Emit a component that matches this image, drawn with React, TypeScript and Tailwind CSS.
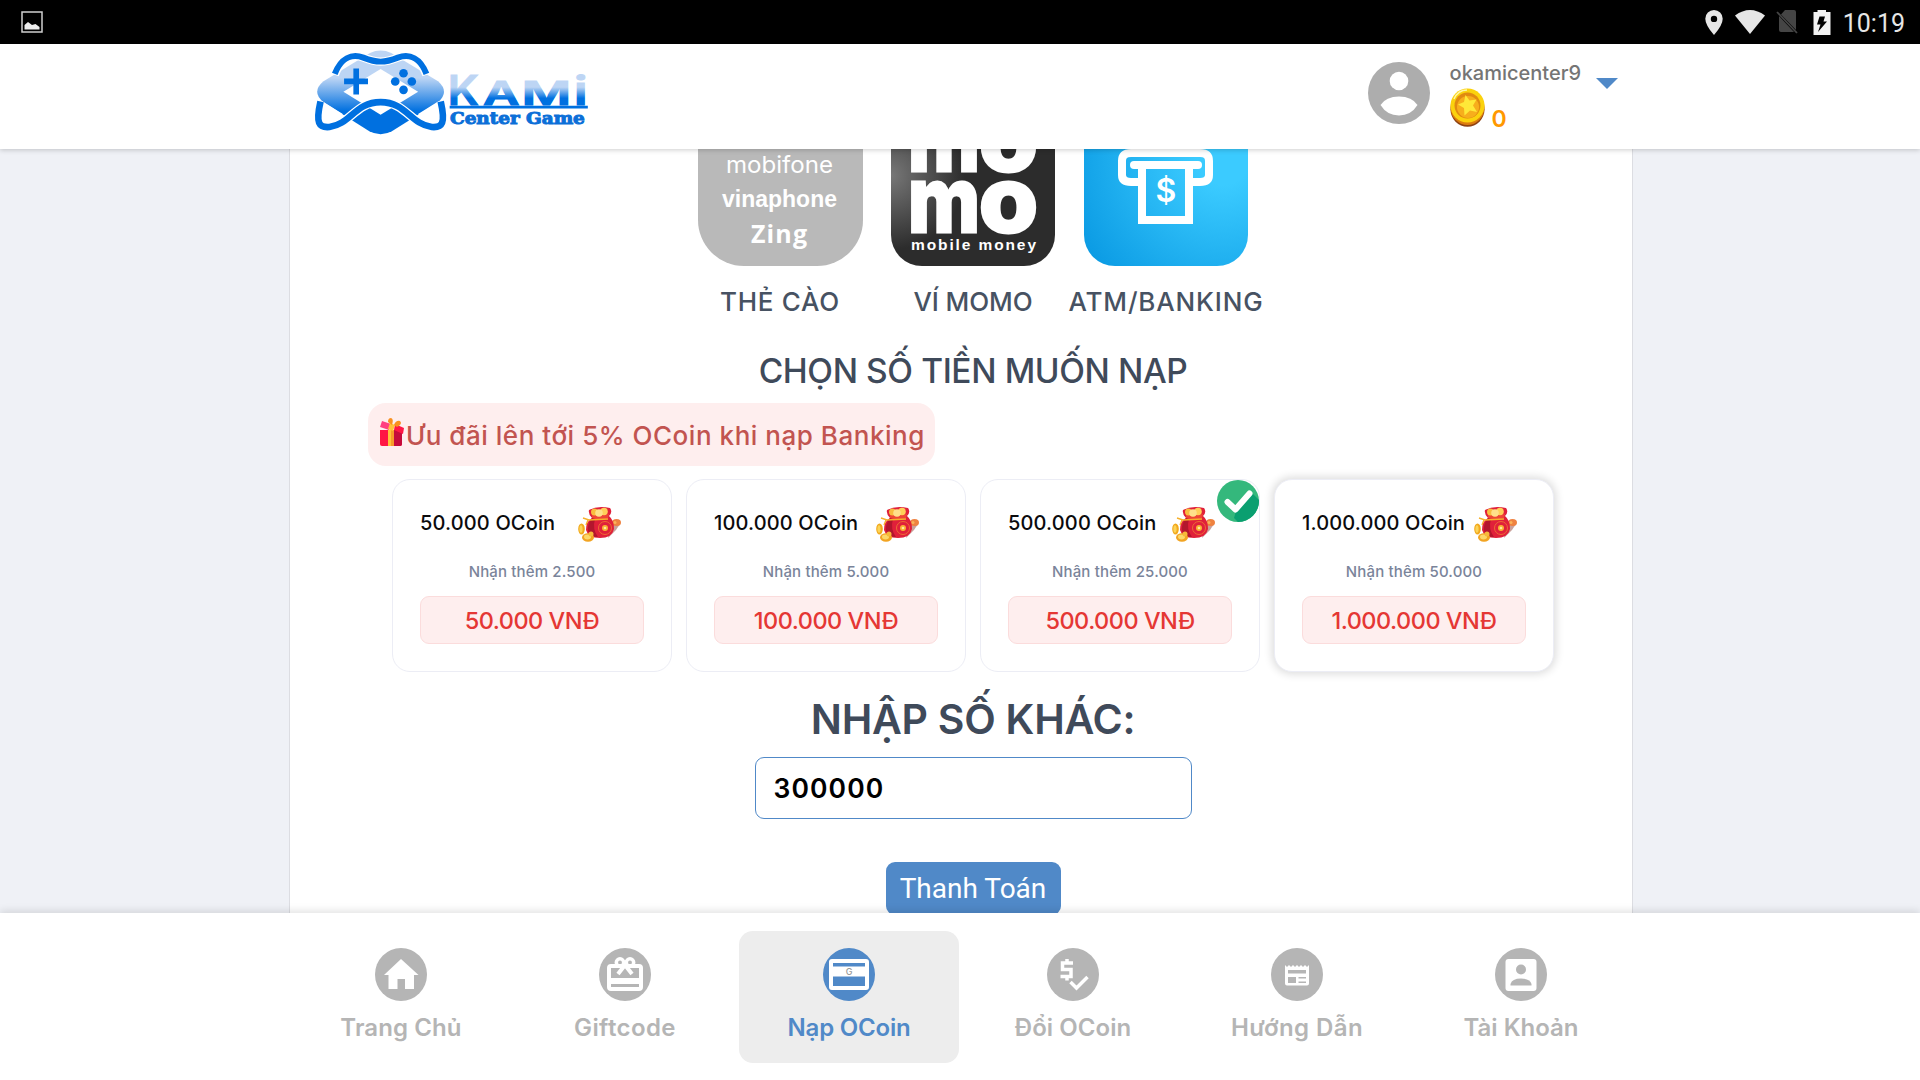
import { FC, ReactNode } from "react";

type Pack = {
  coins: string;
  bonus: string;
  price: string;
  selected?: boolean;
  raised?: boolean;
};

const packs: Pack[] = [
  { coins: "50.000 OCoin", bonus: "Nhận thêm 2.500", price: "50.000 VNĐ" },
  { coins: "100.000 OCoin", bonus: "Nhận thêm 5.000", price: "100.000 VNĐ" },
  { coins: "500.000 OCoin", bonus: "Nhận thêm 25.000", price: "500.000 VNĐ", selected: true },
  { coins: "1.000.000 OCoin", bonus: "Nhận thêm 50.000", price: "1.000.000 VNĐ", raised: true },
];

const Logo: FC = () => (
  <svg viewBox="100 145 840 265" className="h-[88px] w-[280px]">
    <defs>
      <linearGradient id="body" x1="0" y1="150" x2="0" y2="400" gradientUnits="userSpaceOnUse">
        <stop offset="0.34" stopColor="#bdd5f4" />
        <stop offset="0.74" stopColor="#0070e0" />
      </linearGradient>
      <linearGradient id="word" x1="0" y1="225" x2="0" y2="320" gradientUnits="userSpaceOnUse">
        <stop offset="0.4" stopColor="#bdd5f4" />
        <stop offset="0.75" stopColor="#0070e0" />
      </linearGradient>
    </defs>
    <path
      d="M130 245Q92 277 130 308L268 396Q302 414 336 396L475 308Q511 277 475 245L334 160Q302 145 270 160Z"
      fill="url(#body)"
    />
    <path d="M302 208L415 277L302 346L190 277Z" fill="#fff" />
    <path d="M108 300L128 306L188 344Q160 386 128 380ZM496 300L475 306L415 344Q444 386 476 380Z" fill="#fff" />
    <g fill="none">
      <path d="M164 226C182 176 214 161 250 174C290 190 314 190 354 174C390 161 422 176 440 226" stroke="#fff" strokeWidth="25" />
      <path d="M164 223C182 176 214 161 250 174C290 190 314 190 354 174C390 161 422 176 440 223" stroke="#0070e0" strokeWidth="18" />
      <path d="M121 306C102 372 116 386 148 383C212 374 226 308 302 308C378 308 392 374 456 383C488 386 502 372 483 306" stroke="#fff" strokeWidth="27" />
      <path d="M121 306C106 372 116 386 148 383C212 374 226 308 302 308C378 308 392 374 456 383C488 386 498 372 483 306" stroke="#0070e0" strokeWidth="20" />
    </g>
    <path d="M220 207h17v30h27v17h-27v31h-17v-31h-28v-17h28z" fill="#0070e0" />
    <g fill="#0070e0">
      <circle cx="371" cy="221" r="13" />
      <circle cx="371" cy="271" r="13" />
      <circle cx="346" cy="246" r="13" />
      <circle cx="396" cy="246" r="13" />
    </g>
    <text y="317" fill="url(#word)" stroke="url(#word)" strokeWidth="3" className="font-['Inter'] font-semibold">
      <tspan x="504" fontSize="122" textLength="94" lengthAdjust="spacingAndGlyphs">K</tspan>
      <tspan x="610" fontSize="98" textLength="110" lengthAdjust="spacingAndGlyphs">A</tspan>
      <tspan x="726" fontSize="98" textLength="150" lengthAdjust="spacingAndGlyphs">M</tspan>
      <tspan x="884" fontSize="118" textLength="42" lengthAdjust="spacingAndGlyphs">i</tspan>
    </text>
    <path d="M510 323H926" stroke="#0070e0" strokeWidth="8" />
    <text x="511" y="374" fontSize="49" textLength="406" lengthAdjust="spacingAndGlyphs" fill="#0b6fd8" stroke="#0b6fd8" strokeWidth="3" className="font-['DejaVu_Serif'] font-bold">
      Center Game
    </text>
  </svg>
);

const Coin: FC = () => (
  <svg viewBox="0 0 35 39" className="h-[39px] w-[35px]">
    <ellipse cx="17.5" cy="21.5" rx="17" ry="17.3" fill="#8f4312" />
    <ellipse cx="17.5" cy="19.5" rx="17" ry="17.5" fill="#dd7d0e" />
    <ellipse cx="17.5" cy="17.5" rx="17" ry="17" fill="#fbd20d" />
    <ellipse cx="17.5" cy="17.5" rx="13" ry="13" fill="#e08a10" />
    <ellipse cx="18" cy="19" rx="11" ry="11" fill="#f7ae1c" />
    <path d="M15.500 7l4 5.500l7-1l-3.500 6l4 6.500l-7-1.500l-5.500 5l-.5-7.500l-6-3.500l6-2.500z" fill="#ffe838" />
    <path d="M4 11Q8 2 17 2" stroke="#fff6a8" strokeWidth="1.500" fill="none" />
  </svg>
);

const MoneyBag: FC = () => (
  <svg viewBox="0 0 44 35" className="mt-[3px] h-[35px] w-11 shrink-0 overflow-visible">
    <path d="M33 15l6-1l3 3l-4 6l-8 8z" fill="#c9a09a" />
    <ellipse cx="38.500" cy="15.500" rx="4.500" ry="3.500" fill="#ef8240" />
    <circle cx="37" cy="15.500" r="1.500" fill="#f9b45a" />
    <path d="M11 3Q20-2 32 1Q35 5 31 9Q36 13 36 22Q34 31 22 31Q10 31 8 23Q8 14 14 11Q10 7 11 3Z" fill="#e0203a" />
    <path d="M14 11Q9 17 10 24Q13 30 20 30Q14 22 17 12Z" fill="#b3162d" />
    <path d="M14 5Q21 10 31 7L30 11Q22 14 14 11Z" fill="#ef4436" />
    <circle cx="16.500" cy="5" r="3.500" fill="#f9bd3f" />
    <circle cx="26" cy="4.500" r="3.800" fill="#ffcf58" />
    <circle cx="21" cy="6" r="3.800" fill="#ffe08a" />
    <path d="M5 11l6 2l19-1M10 13l-2 5" stroke="#f6b02c" strokeWidth="1.400" fill="none" />
    <circle cx="27" cy="21" r="6.500" fill="none" stroke="#ee6a33" strokeWidth="1" />
    <circle cx="27" cy="21" r="3" fill="#f9b233" />
    <circle cx="27" cy="21" r="1.300" fill="#ffe9a0" />
    <ellipse cx="3.500" cy="22" rx="3.300" ry="5.500" fill="#f2a91d" />
    <ellipse cx="3" cy="22" rx="1.600" ry="3.800" fill="#fbd458" />
    <ellipse cx="10" cy="30.500" rx="6" ry="4.200" fill="#f2a422" />
    <ellipse cx="9.500" cy="30" rx="3.500" ry="2.400" fill="#fcd868" />
    <circle cx="13" cy="27" r="2.500" fill="#f6b93a" />
  </svg>
);

const Gift: FC = () => (
  <svg viewBox="0 0 24 28" className="-mt-1.5 h-7 w-6 shrink-0">
    <path d="M0 12h22v14a2 2 0 0 1-2 2H2a2 2 0 0 1-2-2z" fill="#ff1744" />
    <path d="M13 12h9v14a2 2 0 0 1-2 2h-7z" fill="#c60a3b" />
    <path d="M8 12h6v16H8z" fill="#ffc23a" />
    <path d="M11 12h3v16h-3z" fill="#f79a2a" />
    <path d="M2 3l9 3l-2 6l-9-3z" fill="#ff4081" />
    <path d="M15 6l9 4l-1 6l-9-4z" fill="#ff1744" />
    <path d="M10 5l5 2l-2 6l-5-2z" fill="#ffc23a" />
    <path d="M8 4Q8 0 11 0Q14 1 12 7ZM14 7Q16 2 20 3Q23 6 17 9Z" fill="#f99020" />
  </svg>
);

const CardTile: FC = () => (
  <svg viewBox="0 0 165 165" className="h-[165px] w-[165px] rounded-[46px]">
    <rect width="165" height="165" fill="#b9b9b9" />
    <g fill="#fff">
      <text x="28" y="72" fontSize="23" textLength="107" lengthAdjust="spacingAndGlyphs" className="font-['Inter'] font-normal">
        mobifone
      </text>
      <text x="24" y="106" fontSize="24" textLength="115" lengthAdjust="spacingAndGlyphs" className="font-['Liberation_Sans'] font-bold">
        vinaphone
      </text>
      <text x="53" y="142" fontSize="25" textLength="56" lengthAdjust="spacing" className="font-['Open_Sans'] font-bold">
        Zing
      </text>
    </g>
  </svg>
);

const MomoTile: FC = () => (
  <svg viewBox="0 0 164 165" className="h-[165px] w-[164px] rounded-[31px]">
    <defs>
      <radialGradient id="shine" cx="0" cy="0.45" r="0.45">
        <stop offset="0" stopColor="#777" />
        <stop offset="1" stopColor="#2c2c2c" />
      </radialGradient>
    </defs>
    <rect width="164" height="165" fill="url(#shine)" />
    <g fill="#fff" stroke="#fff" strokeWidth="3" fontSize="91" className="font-['Inter'] font-extrabold">
      <text x="17" y="70" textLength="72" lengthAdjust="spacingAndGlyphs">m</text>
      <text x="88" y="70" textLength="59" lengthAdjust="spacingAndGlyphs">o</text>
      <text x="17" y="131" textLength="72" lengthAdjust="spacingAndGlyphs">m</text>
      <text x="88" y="131" textLength="59" lengthAdjust="spacingAndGlyphs">o</text>
    </g>
    <text x="20" y="149" fontSize="15.500" textLength="125" fill="#fff" className="font-['Liberation_Sans'] font-bold">
      mobile money
    </text>
  </svg>
);

const AtmTile: FC = () => (
  <svg viewBox="0 0 164 165" className="h-[165px] w-[164px] rounded-[31px]">
    <defs>
      <radialGradient id="sky" cx="0.85" cy="0.35" r="1.05">
        <stop offset="0.15" stopColor="#3bcbff" />
        <stop offset="1" stopColor="#0898e2" />
      </radialGradient>
    </defs>
    <rect width="164" height="165" fill="url(#sky)" />
    <g fill="none" stroke="#fff" strokeWidth="8" strokeLinejoin="round">
      <path d="M54 81H47Q38 81 38 74V60Q38 52 47 52H116Q125 52 125 60V74Q125 81 116 81H109" />
      <path d="M50 64H114" strokeLinecap="round" />
      <path d="M58 65V119H105V65" strokeLinejoin="miter" />
      <path d="M58 119H105" />
    </g>
    <text x="82" y="101" fontSize="32" textAnchor="middle" fill="#fff" className="font-['Inter'] font-semibold">
      $
    </text>
  </svg>
);

const methods = [
  { label: "THẺ CÀO", tile: <CardTile />, tracking: "tracking-[0.7px]" },
  { label: "VÍ MOMO", tile: <MomoTile />, tracking: "tracking-[-0.1px]" },
  { label: "ATM/BANKING", tile: <AtmTile />, tracking: "tracking-[0.85px]" },
];

const PackCard: FC<{ pack: Pack }> = ({ pack }) => (
  <div
    className={`relative h-[193px] rounded-[18px] border border-[#ecedf5] bg-white px-[27px] pt-[27px] ${
      pack.raised ? "shadow-[0_0_9px_2px_rgba(0,0,0,0.14)]" : ""
    }`}
  >
    <div className="flex h-8 items-center text-[20px] font-medium tracking-[0.15px] text-[#0b0b0d]">
      <span className="whitespace-nowrap">{pack.coins}</span>
      <div className="flex flex-1 justify-center">
        <MoneyBag />
      </div>
    </div>
    <p className="mt-[21px] text-center text-[15px] leading-6 font-medium tracking-[0.15px] text-[#7a849a]">
      {pack.bonus}
    </p>
    <div className="mt-3 flex h-12 items-center justify-center rounded-[9px] border border-[#fbdcdc] bg-[#feeeee] pt-px text-[23.5px] font-medium tracking-[-0.5px] text-[#e53734]">
      {pack.price}
    </div>
    {pack.selected && (
      <svg viewBox="0 0 42 42" className="absolute top-0 right-0 h-[42px] w-[42px]">
        <circle cx="21" cy="21" r="21" fill="#34b87c" />
        <path d="M35 13L42 20A21 21 0 0 1 21 42L17 38L19 31Z" fill="#0a9f70" />
        <path d="M10.500 22L18.500 29.500L32.500 13.500" fill="none" stroke="#fff" strokeWidth="6" strokeLinecap="round" strokeLinejoin="round" />
      </svg>
    )}
  </div>
);

type NavItem = { label: string; icon: ReactNode; tracking: string; active?: boolean };

const navItems: NavItem[] = [
  {
    label: "Trang Chủ",
    tracking: "tracking-[0.1px]",
    icon: <path d="M26 11L43.500 27H39V41H30V31H22.500V41H13.500V27H9Z" fill="#fff" />,
  },
  {
    label: "Giftcode",
    tracking: "tracking-[0.4px]",
    icon: (
      <g fill="none" stroke="#fff" strokeWidth="4">
        <rect x="10" y="18" width="32" height="23" rx="2" />
        <path d="M10 33H42" strokeWidth="6" />
        <circle cx="21" cy="14.500" r="3.700" strokeWidth="3.500" />
        <circle cx="31" cy="14.500" r="3.700" strokeWidth="3.500" />
        <path d="M26 17L19 26M26 17L33 26" />
      </g>
    ),
  },
  {
    label: "Nạp OCoin",
    tracking: "tracking-[-0.2px]",
    active: true,
    icon: (
      <>
        <path fillRule="evenodd" d="M9 11H43Q46 11 46 14V39Q46 42 43 42H9Q6 42 6 39V14Q6 11 9 11ZM10 15V18.500H42V15ZM10 28.500V38H42V28.500Z" fill="#fff" />
        <text x="26" y="26.500" fontSize="9" textAnchor="middle" fill="#999" className="font-['Inter'] font-medium">
          G
        </text>
      </>
    ),
  },
  {
    label: "Đổi OCoin",
    tracking: "tracking-[0.05px]",
    icon: (
      <g fill="none" stroke="#fff" strokeWidth="3.500">
        <path d="M26 15H15.500V21.500H24V28.500H13.500M20 11V15M20 28.500V32.500" />
        <path d="M23.500 34L29.500 40L40.500 29" />
      </g>
    ),
  },
  {
    label: "Hướng Dẫn",
    tracking: "tracking-[0.4px]",
    icon: (
      <>
        <path d="M14 17l2 2l2-2l2 2l2-2l2 2l2-2l2 2l2-2l2 2l2-2l2 2l2-2V35.500Q38 37.500 36 37.500H16Q14 37.500 14 35.500Z" fill="#fff" />
        <path d="M17 22H35V25.500H17ZM17 29H25V35H17ZM27.500 29H35V30.500H27.500ZM27.500 33.500H35V35H27.500Z" fill="#b5b5b5" />
      </>
    ),
  },
  {
    label: "Tài Khoản",
    tracking: "tracking-[0px]",
    icon: (
      <>
        <rect x="10.500" y="11" width="31" height="32" rx="3" fill="#fff" />
        <circle cx="26" cy="21.500" r="5" fill="#b5b5b5" />
        <path d="M15.500 37.500V36Q17 30.500 26 30.500Q35 30.500 36.500 36V37.500Z" fill="#b5b5b5" />
      </>
    ),
  },
];

const BottomNav: FC = () => (
  <nav className="relative z-10 flex h-[167px] justify-center gap-1 bg-white pt-[18px] pl-[2px] shadow-[0_-2px_8px_rgba(0,0,0,0.12)]">
    {navItems.map(({ label, icon, active, tracking }) => (
      <div
        key={label}
        className={`flex h-[132px] w-[220px] flex-col items-center rounded-[14px] pt-[17px] text-[24px] font-semibold ${
          active ? "bg-[#ededed] text-[#5089c8]" : "text-[#b5b5b5]"
        }`}
      >
        <svg viewBox="0 0 52 53" className="h-[53px] w-[52px]">
          <ellipse cx="26" cy="26.500" rx="26" ry="26.500" fill="currentColor" />
          {icon}
        </svg>
        <span className={`mt-[9px] leading-9 ${tracking}`}>{label}</span>
      </div>
    ))}
  </nav>
);

const StatusBar: FC = () => (
  <div className="flex h-11 items-center justify-between bg-black pr-[15px] pl-[21px]">
    <svg viewBox="0 0 22 22" className="h-[22px] w-[22px]">
      <rect x="1" y="1" width="20" height="20" fill="none" stroke="#cfcfcf" strokeWidth="1.500" />
      <path d="M3.500 18.500V14L7 11L11 14L14.500 13L18.500 16V18.500Z" fill="#eee" />
    </svg>
    <div className="flex items-center">
      <svg viewBox="0 0 18 25" className="h-[25px] w-[18px]">
        <path fillRule="evenodd" d="M9 0A8.700 8.700 0 0 1 17.700 8.700Q17.700 15 9 25Q.3 15 .3 8.700A8.700 8.700 0 0 1 9 0ZM9 5.700A3.200 3.200 0 1 0 9 12.100A3.200 3.200 0 1 0 9 5.700Z" fill="#e6e6e6" />
      </svg>
      <svg viewBox="0 0 30 24" className="ml-3 h-6 w-[30px]">
        <path d="M0 5.500Q15-5.500 30 5.500L15 24Z" fill="#e6e6e6" />
      </svg>
      <svg viewBox="0 0 22 24" className="ml-[11px] h-6 w-[22px]">
        <path d="M9 0H18Q20 0 20 2V20L5 4.500ZM3 6L18 22H5Q3 22 3 20Z" fill="#454545" />
        <path d="M1 2L21 23" stroke="#454545" strokeWidth="1.800" />
      </svg>
      <svg viewBox="0 0 18 25" className="ml-[15px] h-[25px] w-[18px]">
        <path d="M4.500 0H13V2H17.500V25H.5V2H4.500Z" fill="#f2f2f2" />
        <path d="M6.500 6.500H12L10.500 11.500H14L5 22L7.500 14.500H4Z" fill="#000" />
      </svg>
      <span className="mt-[3px] ml-3 font-['Roboto'] text-[25px] leading-none text-[#e6e6e6]">10:19</span>
    </div>
  </div>
);

const Header: FC = () => (
  <header className="relative z-10 flex h-[105px] justify-between bg-white pr-[302px] pl-[313px] shadow-[0_1px_5px_rgba(0,0,0,0.2)]">
    <div className="pt-1">
      <Logo />
    </div>
    <div className="flex">
      <svg viewBox="0 0 62 62" className="mt-[18px] h-[62px] w-[62px]">
        <circle cx="31" cy="31" r="31" fill="#adadad" />
        <circle cx="31" cy="19" r="9.300" fill="#fff" />
        <path d="M12.500 43Q18 34.500 31 34.500Q44 34.500 49.500 43Q43 53.500 31 53.500Q19 53.500 12.500 43Z" fill="#fff" />
      </svg>
      <div className="ml-5 pt-[14px]">
        <p className="text-[20px] leading-[30px] font-medium text-[#757575]">okamicenter9</p>
        <div className="flex">
          <Coin />
          <span className="ml-[7px] text-[23px] leading-[62px] font-semibold text-[#ff9800]">0</span>
        </div>
      </div>
      <svg viewBox="0 0 22 11" className="mt-[34px] ml-[15px] h-[11px] w-[22px]">
        <path d="M0 0H22L11 11Z" fill="#5089c8" />
      </svg>
    </div>
  </header>
);

export default function App() {
  return (
    <div className="flex h-[1080px] w-[1920px] flex-col overflow-hidden bg-[#eff1f6] font-['Inter','Noto_Sans',sans-serif]">
      <StatusBar />
      <Header />
      <main className="ml-[289px] flex min-h-0 w-[1344px] flex-1 flex-col overflow-hidden border-x border-[#dcdde2] bg-white pr-[54px] pl-[78px]">
        <div className="-mt-12 flex shrink-0 justify-center gap-7">
          {methods.map(({ label, tile, tracking }) => (
            <div key={label} className="flex w-[165px] flex-col items-center">
              {tile}
              <p className={`mt-[18px] text-[26px] leading-9 font-medium whitespace-nowrap text-[#475262] ${tracking}`}>
                {label}
              </p>
            </div>
          ))}
        </div>
        <h2 className="mt-[27px] text-center text-[33.5px] leading-[48px] font-medium tracking-[-0.4px] text-[#3f4a5a]">
          CHỌN SỐ TIỀN MUỐN NẠP
        </h2>
        <div className="mt-2 flex h-[63px] w-[567px] shrink-0 items-center rounded-[18px] bg-[#feeeee] pl-3 text-[26px] font-medium tracking-[0.53px] text-[#c25450]">
          <Gift />
          <span className="ml-0.5 pt-px whitespace-nowrap">Ưu đãi lên tới 5% OCoin khi nạp Banking</span>
        </div>
        <div className="mx-6 mt-[13px] grid grid-cols-4 gap-[14px]">
          {packs.map((pack) => (
            <PackCard key={pack.price} pack={pack} />
          ))}
        </div>
        <h1 className="mt-[17px] text-center text-[41px] leading-[60px] font-semibold tracking-[-0.25px] text-[#3f4a5a]">
          NHẬP SỐ KHÁC:
        </h1>
        <div className="mx-auto mt-2 flex h-[62px] w-[437px] shrink-0 items-center rounded-[9px] border border-[#5089c8] px-[18px] pt-px text-[26.5px] font-semibold tracking-[1.1px] text-black">
          300000
        </div>
        <button className="mx-auto mt-[43px] h-[53px] w-[175px] shrink-0 rounded-[9px] bg-[#5089c8] font-['Roboto'] text-[28px] text-white">
          Thanh Toán
        </button>
      </main>
      <BottomNav />
    </div>
  );
}
